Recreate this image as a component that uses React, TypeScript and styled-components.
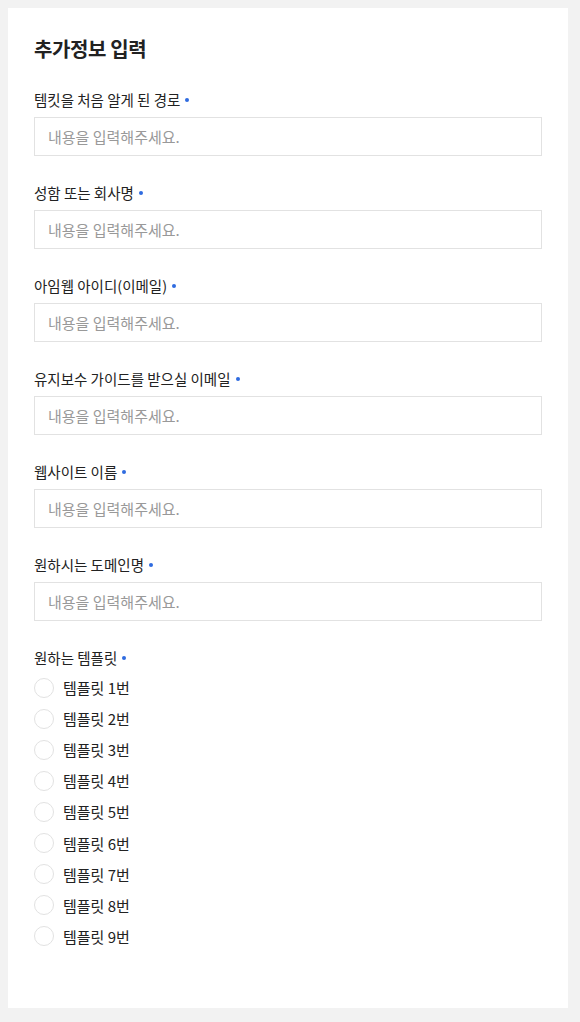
import React from "react";
import styled, { createGlobalStyle } from "styled-components";

const Global = createGlobalStyle`
  html, body { margin: 0; padding: 0; background: #f2f2f2; }
  body { font-family: "Noto Sans CJK KR", "Noto Sans", sans-serif; color: #222; }
  * { box-sizing: border-box; }
`;

const Page = styled.div`
  padding: 8px 12px 14px 8px;
`;

const Card = styled.form`
  background: #fff;
  width: 560px;
  padding: 26px 26px 56px;
  display: flex;
  flex-direction: column;
`;

const Title = styled.h2`
  margin: 0 0 26px;
  font-size: 20px;
  line-height: 30px;
  font-weight: 700;
  color: #222;
  letter-spacing: -0.4px;
`;

const Field = styled.div`
  display: flex;
  flex-direction: column;
  margin-bottom: 27px;
`;

const Label = styled.label`
  font-size: 14.5px;
  line-height: 20px;
  color: #222;
  display: flex;
  align-items: center;
`;

const Required = styled.span`
  display: inline-block;
  width: 4px;
  height: 4px;
  border-radius: 50%;
  background: #2f6be0;
  margin-left: 5px;
`;

const Input = styled.input`
  margin-top: 7px;
  height: 39px;
  width: 100%;
  border: 1px solid #e2e2e2;
  padding: 0 13px;
  font-family: inherit;
  font-size: 15px;
  color: #222;
  outline: none;
  background: #fff;
  &::placeholder { color: #999; }
`;

const RadioList = styled.div`
  display: flex;
  flex-direction: column;
  margin-top: 4px;
`;

const RadioRow = styled.label`
  display: flex;
  align-items: center;
  height: 31.1px;
  gap: 9px;
  font-size: 15px;
  color: #222;
  cursor: pointer;
`;

const RadioCircle = styled.input`
  appearance: none;
  margin: 0;
  width: 20px;
  height: 20px;
  border-radius: 50%;
  border: 1px solid #e2e2e2;
  background: #fff;
`;

const fields = [
  "템킷을 처음 알게 된 경로",
  "성함 또는 회사명",
  "아임웹 아이디(이메일)",
  "유지보수 가이드를 받으실 이메일",
  "웹사이트 이름",
  "원하시는 도메인명",
];

export default function App() {
  return (
    <>
      <Global />
      <Page>
        <Card onSubmit={(e) => e.preventDefault()}>
          <Title>추가정보 입력</Title>
          {fields.map((f) => (
            <Field key={f}>
              <Label>
                {f}
                <Required />
              </Label>
              <Input placeholder="내용을 입력해주세요." />
            </Field>
          ))}
          <div>
            <Label>
              원하는 템플릿
              <Required />
            </Label>
            <RadioList>
              {Array.from({ length: 9 }, (_, i) => (
                <RadioRow key={i}>
                  <RadioCircle type="radio" name="template" />
                  템플릿 {i + 1}번
                </RadioRow>
              ))}
            </RadioList>
          </div>
        </Card>
      </Page>
    </>
  );
}
